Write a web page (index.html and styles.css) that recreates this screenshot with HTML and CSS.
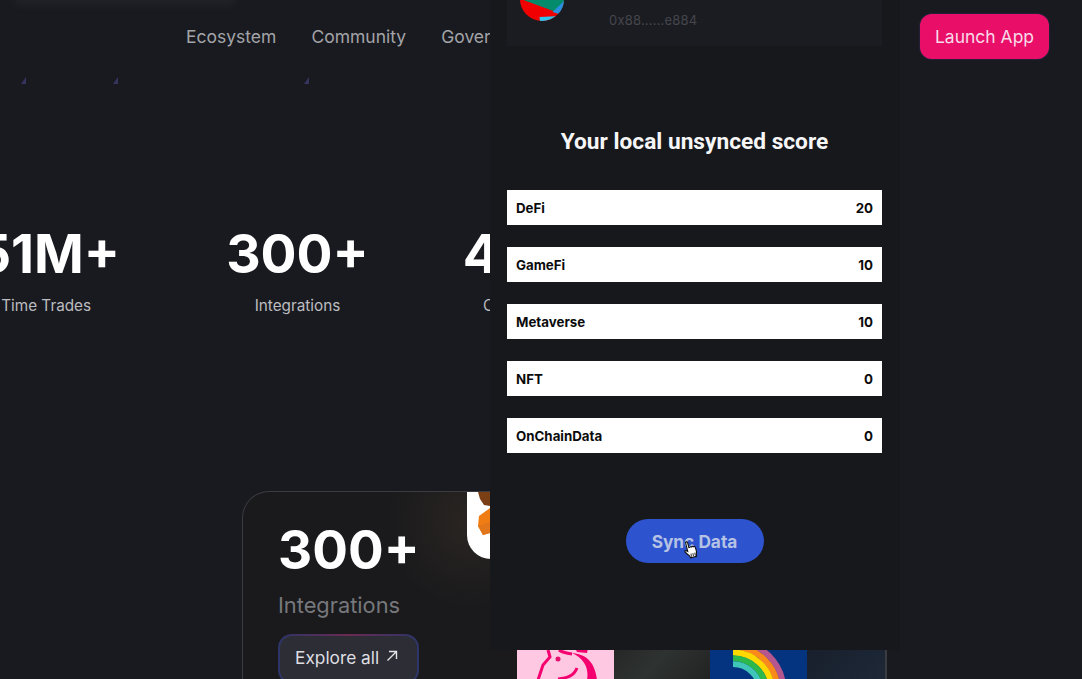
FILE: index.html
```html
<!DOCTYPE html>
<html lang="en">
<head>
<meta charset="utf-8">
<title>Your local unsynced score</title>
<link rel="stylesheet" href="styles.css">
</head>
<body>
<div class="page">
  <div class="blur-strip"></div>
  <span class="tick tick-a"></span>
  <span class="tick tick-b"></span>
  <span class="tick tick-c"></span>
  <header class="nav">
    <a class="nav-link">Ecosystem</a>
    <a class="nav-link">Community</a>
    <a class="nav-link">Governance</a>
    <a class="launch">Launch App</a>
  </header>
  <section class="stats">
    <div class="stat">
      <div class="stat-num">$51M+</div>
      <div class="stat-label stat-label-first">All Time Trades</div>
    </div>
    <div class="stat">
      <div class="stat-num">300+</div>
      <div class="stat-label">Integrations</div>
    </div>
    <div class="stat">
      <div class="stat-num">400+</div>
      <div class="stat-label">Collaborations</div>
    </div>
  </section>
  <section class="card">
    <div class="card-text">
      <div class="card-num">300+</div>
      <div class="card-label">Integrations</div>
      <a class="explore"><span>Explore all</span>
        <svg class="explore-arrow" viewBox="0 0 12 12" width="12" height="12"><path d="M1.500 10.500 10.500 1.500M3 1.500h7.500V9" fill="none" stroke="#e4e4e6" stroke-width="1.400"/></svg>
      </a>
    </div>
    <div class="logos">
      <div class="tile-mm">
        <svg viewBox="0 0 96 67" width="96" height="67">
          <path d="M11 0H23V14L17 13 13 7z" fill="#7a3f14"/>
          <path d="M23 16 12 24 11 34 16 43 23 41z" fill="#ef7d14"/>
          <path d="M11 34 23 30V41L16 43z" fill="#e2761b"/>
        </svg>
      </div>
      <div class="tile-row">
        <div class="tile tile-uni">
          <svg viewBox="0 0 96 96" width="96" height="96">
            <g fill="none" stroke="#f5006f" stroke-width="3">
              <path d="M31 51 33 58 26 66 21 81"/>
              <path d="M42 51C46 54 50 54 55 55"/>
              <path d="M41 80C50 79 57 77 60 69"/>
            </g>
            <path d="M55 54C68 55 78 62 80 81H70C72 70 68 60 55 54z" fill="#f5006f"/>
            <path d="M58 49H71L70 54 60 53z" fill="#f5006f"/>
            <circle cx="41" cy="60" r="2.500" fill="#e8106e"/>
          </svg>
        </div>
        <div class="tile tile-dark"></div>
        <div class="tile tile-rainbow">
          <svg viewBox="0 0 96 96" width="96" height="96">
            <g fill="none" stroke-width="5.900">
              <path d="M23 41.900A50.500 50.500 0 0 1 73.500 92.400" stroke="#b6568f"/>
              <path d="M23 47.700A44.700 44.700 0 0 1 67.700 92.400" stroke="#fb8a1c"/>
              <path d="M23 53.500A38.900 38.900 0 0 1 61.900 92.400" stroke="#ffd800"/>
              <path d="M23 59.300A33.100 33.100 0 0 1 56.100 92.400" stroke="#2cb84a"/>
              <path d="M23 65.100A27.300 27.300 0 0 1 50.300 92.400" stroke="#3fc6b8"/>
            </g>
          </svg>
        </div>
        <div class="tile tile-blue"></div>
      </div>
    </div>
  </section>
  <aside class="modal">
    <div class="wallet">
      <svg class="avatar" viewBox="0 0 44 44" width="44" height="44">
        <defs><clipPath id="av"><circle cx="22" cy="22" r="22"/></clipPath></defs>
        <g clip-path="url(#av)">
          <rect width="44" height="44" fill="#f00000"/>
          <path d="M0 0H44V38L3.500 23 0 20z" fill="#038b6c"/>
          <path d="M44 24 32.500 35 40.500 37.500 44 36z" fill="#2b8fe0"/>
          <path d="M19.500 40 40 39 34 46H20z" fill="#2fc4ec"/>
        </g>
      </svg>
      <span class="address">0x88......e884</span>
    </div>
    <h2 class="title">Your local unsynced score</h2>
    <ul class="scores">
      <li class="score"><span>DeFi</span><span>20</span></li>
      <li class="score"><span>GameFi</span><span>10</span></li>
      <li class="score"><span>Metaverse</span><span>10</span></li>
      <li class="score"><span>NFT</span><span>0</span></li>
      <li class="score"><span>OnChainData</span><span>0</span></li>
    </ul>
    <div class="sync-wrap">
      <a class="sync">Sync Data
        <svg class="hand" viewBox="0 0 14 19" width="14" height="19"><g transform="rotate(-14 7 10)"><path d="M3.500 1.200c1-.6 2 0 2 1v5l1 0c.4-.6 1.400-.6 1.800 0 .5-.5 1.400-.5 1.800.2.6-.3 1.600 0 1.700 1l.2 3.600c0 1.500-.6 2.600-1 4l-.1 1.400H4.700l-.3-1.400C3.400 14 1.400 12.500.8 10.400c-.3-1 .8-1.500 1.500-.9l1.200 1.100z" fill="#fff" stroke="#111" stroke-width="1.100"/><path d="M6 13.500v3M8 13.500v3M10 13.500v3" stroke="#333" stroke-width="1"/></g></svg>
      </a>
    </div>
  </aside>
</div>
</body>
</html>
```
FILE: styles.css
```css
* { box-sizing: border-box; }
html, body { margin: 0; padding: 0; }
body { background: #191a1f; font-family: Inter, "Liberation Sans", sans-serif; }
.page { position: relative; width: 1082px; height: 679px; overflow: hidden; background: #191a1f; }

.blur-strip { position: absolute; left: 15px; top: -6px; width: 220px; height: 11px; background: #212228; filter: blur(3px); }
.tick { position: absolute; top: 77px; width: 5px; height: 7px; background: #35345e; clip-path: polygon(100% 0, 100% 100%, 0 100%); }
.tick-a { left: 21px; }
.tick-b { left: 113px; }
.tick-c { left: 304px; }

.nav { display: flex; align-items: center; gap: 35px; padding: 14px 33px 0 186px; }
.nav-link { color: #a3a4a8; font-size: 17.500px; white-space: nowrap; }
.launch { margin-left: auto; width: 129px; height: 45px; display: flex; align-items: center; justify-content: center; background: #e90e68; border-radius: 12px; box-shadow: 0 0 2px 0 #46307a; color: #f8dbe8; font-size: 17.500px; }

.stats { display: grid; grid-template-columns: 250px 283px 192px; margin: 165px 0 0 -94px; }
.stat { text-align: center; white-space: nowrap; }
.stat-num { color: #fff; font-size: 53.400px; font-weight: 700; line-height: 60px; }
.stat-label { margin-top: 12px; color: #bcbdc0; font-size: 15.300px; line-height: 20px; }
.stat-label-first { padding-left: 8px; }

.card { display: flex; width: 645px; height: 260px; margin: 175px 0 0 242px; border: 1px solid #3b3c40; border-width: 1px 2px 0 1px; border-radius: 27px 27px 0 0; background: radial-gradient(circle at 228px 30px, #2a2522 0, #1a1a1c 85px); overflow: hidden; }
.card-text { width: 224px; flex: none; padding: 28px 0 0 35px; }
.card-num { color: #fff; font-size: 53px; font-weight: 700; line-height: 60px; white-space: nowrap; }
.card-label { margin-top: 11px; color: #77787c; font-size: 21.800px; line-height: 28px; }
.explore { display: inline-flex; align-items: flex-start; gap: 7px; margin-top: 15px; width: 141px; height: 50px; padding: 11px 0 0 15px; border: 2px solid transparent; border-radius: 14px; background: linear-gradient(#2c2d35, #2c2d35) padding-box, linear-gradient(90deg, #2c3568, #6b2a52 50%, #2c3568) border-box; color: #dfdfe2; font-size: 17.300px; line-height: 22px; white-space: nowrap; }
.explore-arrow { margin-top: 3px; }

.logos { flex: 1; min-width: 0; }
.tile-mm { width: 96px; height: 67px; background: #fff; border-radius: 0 0 0 24px; }
.tile-row { display: flex; margin: 40px 0 0 50px; }
.tile { width: 96.500px; height: 96px; flex: none; }
.tile-uni { background: #ffc8e2; }
.tile-dark { background: linear-gradient(135deg, #1c1e1e, #2e3230 55%, #1e2020); }
.tile-rainbow { background: #04337f; }
.tile-blue { background: linear-gradient(135deg, #161c28, #1f2a3a); }

.modal { position: absolute; left: 490px; top: 0; width: 410px; height: 650px; padding: 0 18px 0 17px; background: #17181c; }
.wallet { display: flex; align-items: flex-start; height: 46px; padding-left: 13px; background: #1b1c21; }
.avatar { margin-top: -23px; flex: none; }
.address { margin: 12px 0 0 45px; color: #45464c; font-size: 13px; line-height: 16px; letter-spacing: .2px; }
.title { margin: 81px 0 0; color: #f6f6f7; font-family: Roboto, Inter, sans-serif; font-size: 22.700px; font-weight: 700; line-height: 30px; text-align: center; white-space: nowrap; }
.scores { list-style: none; margin: 33px 0 0; padding: 0; display: flex; flex-direction: column; gap: 22px; }
.score { display: flex; justify-content: space-between; align-items: center; height: 35px; padding: 0 9px; background: #fff; color: #0b0b0c; font-size: 13.300px; font-weight: 700; }
.sync-wrap { display: flex; justify-content: center; margin-top: 66px; }
.sync { position: relative; display: flex; align-items: center; justify-content: center; width: 138px; height: 44px; background: #2d53cf; border-radius: 22px; color: #b5c2e4; font-size: 17.300px; font-weight: 700; }
.hand { position: absolute; left: 58px; top: 21px; }
```
